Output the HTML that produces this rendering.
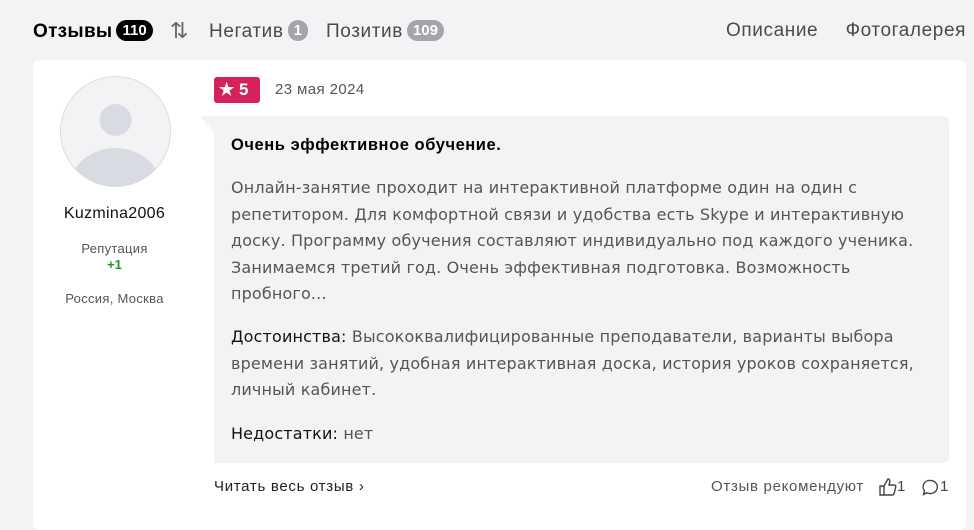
<!DOCTYPE html>
<html><head><meta charset="utf-8"><style>
*{margin:0;padding:0;box-sizing:border-box}
body{width:974px;height:512px;background:#f3f3f6;font-family:"Liberation Sans",sans-serif;position:relative;overflow:hidden;color:#222}
.a{position:absolute;white-space:nowrap}
.tab{font-size:19px;letter-spacing:0.6px;color:#4a4a4a;top:20px}
.badge{display:inline-block;border-radius:11px;color:#fff;font-size:15px;font-weight:bold;padding:0 6px;height:21px;line-height:21px;vertical-align:2px;margin-left:4px;letter-spacing:0}
.card{position:absolute;left:33px;top:60px;width:933px;height:470px;background:#fff;border-radius:6px}
.quote{position:absolute;left:200px;top:116px;width:749px;height:347px;background:#f3f3f6;clip-path:polygon(0 0,100% 0,100% 100%,14px 100%,14px 16px);border-radius:0 6px 6px 6px}
.p{font-family:"DejaVu Sans",sans-serif;font-size:16px;letter-spacing:0.15px;color:#555;line-height:26.5px;left:231px}
.p b{color:#111;font-weight:normal}
</style></head><body>
<div class="a tab" style="left:33px;color:#000;font-weight:bold;letter-spacing:0.3px">Отзывы<span class="badge" style="background:#000">110</span></div>
<div class="a tab" style="left:170px;top:18px;font-size:22px;color:#666">⇅</div>
<div class="a tab" style="left:209px">Негатив<span class="badge" style="background:#a3a5ab">1</span></div>
<div class="a tab" style="left:326px">Позитив<span class="badge" style="background:#a3a5ab">109</span></div>
<div class="a tab" style="left:726px">Описание</div>
<div class="a tab" style="right:8px">Фотогалерея</div>
<div class="card"></div>
<svg class="a" style="left:60px;top:76px" width="111" height="111" viewBox="0 0 111 111"><defs><clipPath id="c"><circle cx="55.5" cy="55.5" r="55"/></clipPath></defs><circle cx="55.5" cy="55.5" r="55" fill="#f3f3f6" stroke="#ddd"/><g clip-path="url(#c)" fill="#d8dbe2"><circle cx="55.5" cy="44" r="16"/><ellipse cx="55.5" cy="112" rx="46" ry="40"/></g></svg>
<div class="a" style="left:33px;width:163px;text-align:center;top:205px;font-size:16px;color:#111;letter-spacing:0.3px">Kuzmina2006</div>
<div class="a" style="left:33px;width:163px;text-align:center;top:241px;font-size:13px;color:#555;letter-spacing:0.3px">Репутация</div>
<div class="a" style="left:33px;width:163px;text-align:center;top:257px;font-size:13px;color:#1a9c1a;font-weight:bold">+1</div>
<div class="a" style="left:33px;width:163px;text-align:center;top:291px;font-size:13px;color:#555;letter-spacing:0.3px">Россия, Москва</div>
<div class="a" style="left:214px;top:77px;width:46px;height:26px;background:#d6225a;border-radius:3px;color:#fff;font-weight:bold;font-size:17px;line-height:26px;padding-left:5px">★ 5</div>
<div class="a" style="left:275px;top:81px;font-size:15px;color:#555;letter-spacing:0.4px">23 мая 2024</div>
<div class="quote"></div>
<div class="a" style="left:231px;top:136px;font-size:16.5px;font-weight:bold;color:#000;letter-spacing:0.55px">Очень эффективное обучение.</div>
<div class="a p" style="top:175px">Онлайн-занятие проходит на интерактивной платформе один на один с<br>репетитором. Для комфортной связи и удобства есть Skype и интерактивную<br>доску. Программу обучения составляют индивидуально под каждого ученика.<br>Занимаемся третий год. Очень эффективная подготовка. Возможность<br>пробного...</div>
<div class="a p" style="top:324px"><b>Достоинства:</b> Высококвалифицированные преподаватели, варианты выбора<br>времени занятий, удобная интерактивная доска, история уроков сохраняется,<br>личный кабинет.</div>
<div class="a p" style="top:421px"><b>Недостатки:</b> нет</div>
<div class="a" style="left:214px;top:478px;font-size:15px;color:#222;letter-spacing:0.7px">Читать весь отзыв ›</div>
<div class="a" style="left:711px;top:478px;font-size:15px;color:#555;letter-spacing:0.7px">Отзыв рекомендуют</div>
<svg class="a" style="left:879px;top:478px" width="18" height="18" viewBox="0 0 18 18" fill="none" stroke="#444" stroke-width="1.4"><path d="M1 8h4v9H1zM5 8l4-7c2 0 2 2 1.5 4L10 7h5c1.5 0 2 1 1.7 2.2l-1.5 6c-.3 1-1 1.8-2 1.8H5"/></svg>
<div class="a" style="left:897px;top:478px;font-size:15px;color:#444">1</div>
<svg class="a" style="left:922px;top:479px" width="17" height="17" viewBox="0 0 17 17" fill="none" stroke="#444" stroke-width="1.4"><path d="M8.5 1.5a7 6.5 0 1 1-3.5 12.2L1.5 15.5l1-3.5A6.5 6.5 0 0 1 8.5 1.5z"/></svg>
<div class="a" style="left:940px;top:478px;font-size:15px;color:#444">1</div>
</body></html>
